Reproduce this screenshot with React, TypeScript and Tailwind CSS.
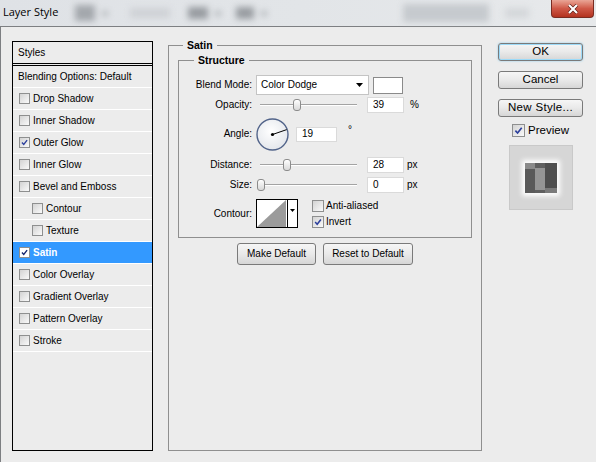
import type { ReactNode } from "react";

type Effect = { label: string; checked?: boolean; sub?: boolean; active?: boolean };

const effects: Effect[] = [
  { label: "Drop Shadow" },
  { label: "Inner Shadow" },
  { label: "Outer Glow", checked: true },
  { label: "Inner Glow" },
  { label: "Bevel and Emboss" },
  { label: "Contour", sub: true },
  { label: "Texture", sub: true },
  { label: "Satin", checked: true, active: true },
  { label: "Color Overlay" },
  { label: "Gradient Overlay" },
  { label: "Pattern Overlay" },
  { label: "Stroke" },
];

function Tick({ className = "" }: { className?: string }) {
  return (
    <svg viewBox="0 0 12 12" className={className}>
      <path d="M2.6 6.1 L5 8.7 L9.5 2.9" fill="none" stroke="currentColor" strokeWidth="1.8" />
    </svg>
  );
}

function CheckBox({ checked, light, className = "" }: { checked?: boolean; light?: boolean; className?: string }) {
  const face = light
    ? "bg-white text-[#14246e]"
    : "bg-linear-to-br from-[#d3d3d3] to-[#fafafa] text-[#2c3f9c]";
  return (
    <span className={`flex shrink-0 items-center justify-center border border-[#8e8f8f] ${face} ${className}`}>
      {checked && <Tick className="h-full w-full" />}
    </span>
  );
}

function Button({ children, className = "" }: { children: ReactNode; className?: string }) {
  return (
    <button
      type="button"
      className={`flex items-center justify-center rounded-[3px] border border-[#7a7a7a] bg-linear-to-b from-[#f6f6f6] via-[#e9e9e9] to-[#d6d6d6] leading-none text-black ${className}`}
    >
      {children}
    </button>
  );
}

function TitleBar() {
  return (
    <div className="flex h-[26px] shrink-0 items-start bg-linear-to-r from-[#dfe2e6] via-[#e2e5e8] to-[#e7e9eb]">
      <span className="mt-[5px] ml-[3px] font-['Open_Sans','Liberation_Sans',sans-serif] text-[11px] leading-[14px] text-black">
        Layer Style
      </span>
      {/* blurred toolbar showing through the glass frame */}
      <div className="mt-[4px] flex items-center blur-[3px]">
        <span className="ml-[17px] h-[16px] w-[20px] bg-[#a4a8ad]" />
        <span className="ml-[7px] h-[5px] w-[6px] bg-[#b3b7bb]" />
        <span className="ml-[22px] h-[10px] w-[40px] bg-[#cfd2d6]" />
        <span className="ml-[18px] h-[12px] w-[20px] bg-[#989ca1]" />
        <span className="ml-[7px] h-[5px] w-[6px] bg-[#b1b5b9]" />
        <span className="ml-[15px] h-[12px] w-[18px] bg-[#999da2]" />
        <span className="ml-[7px] h-[5px] w-[6px] bg-[#b1b5b9]" />
        <span className="ml-[136px] h-[18px] w-[86px] bg-[#c6cace]" />
        <span className="ml-[16px] h-[10px] w-[24px] bg-[#d4d7da]" />
      </div>
      <div className="ml-auto mr-[2px] flex h-[18px] w-[43px] items-center justify-center rounded-b-[4px] border border-t-0 border-[#7a2c22] bg-linear-to-b from-[#e9a596] via-[#cf5847] to-[#b3321f]">
        <svg viewBox="0 0 12 10" className="h-[10px] w-[12px]">
          <path d="M2 1 L10 9 M10 1 L2 9" stroke="#5a1a12" strokeWidth="3.4" />
          <path d="M2 1 L10 9 M10 1 L2 9" stroke="#ffffff" strokeWidth="2.2" />
        </svg>
      </div>
    </div>
  );
}

function StylesList() {
  return (
    <div className="mt-[14px] ml-[11px] h-[410px] w-[141px] shrink-0 border border-black text-[10px] leading-none text-black">
      <div className="flex h-[24px] items-center border-b-[3px] border-double border-black pl-[5px]">Styles</div>
      <div className="flex h-[22px] items-center border-b border-white pl-[5px]">Blending Options: Default</div>
      {effects.map((e) => (
        <div
          key={e.label}
          className={`flex h-[22px] items-center gap-[3px] border-b border-white ${e.sub ? "pl-[19px]" : "pl-[6px]"} ${
            e.active ? "bg-[#3399ff] font-bold text-white" : ""
          }`}
        >
          <CheckBox checked={e.checked} light={e.active} className="h-[11px] w-[11px]" />
          <span>{e.label}</span>
        </div>
      ))}
    </div>
  );
}

function Label({ children }: { children: ReactNode }) {
  return <span className="w-[73px] shrink-0 text-right">{children}</span>;
}

function Slider({ thumb }: { thumb: string }) {
  return (
    <div className="relative ml-[4px] h-[16px] w-[101px] shrink-0">
      <div className="absolute top-[7px] right-0 left-[4px] h-[2px] border-t border-[#a3a3a3] bg-white" />
      <div
        className={`absolute top-[2px] h-[12px] w-[8px] rounded-[3px] border border-[#8c8c8c] bg-linear-to-b from-white to-[#d8d8d8] ${thumb}`}
      />
    </div>
  );
}

function NumberBox({ value, className = "" }: { value: string; className?: string }) {
  return (
    <div className={`flex shrink-0 items-center border border-[#dadada] bg-white pl-[5px] ${className}`}>
      {value}
    </div>
  );
}

function AngleDial() {
  const r = 15;
  const a = (19 * Math.PI) / 180;
  const x = 16.5 + r * Math.cos(a);
  const y = 16.5 - r * Math.sin(a);
  return (
    <svg viewBox="0 0 33 33" className="ml-[4px] h-[33px] w-[33px] shrink-0">
      <defs>
        <radialGradient id="dialFace" cx="0.45" cy="0.4" r="0.6">
          <stop offset="0" stopColor="#ffffff" />
          <stop offset="1" stopColor="#e4e7ec" />
        </radialGradient>
      </defs>
      <circle cx="16.5" cy="16.5" r="15.5" fill="url(#dialFace)" stroke="#52648a" strokeWidth="1.4" />
      <line x1="16.5" y1="16.5" x2={x} y2={y} stroke="#000" strokeWidth="1" />
      <circle cx="16.5" cy="16.5" r="1.6" fill="#000" />
    </svg>
  );
}

function ContourPicker() {
  return (
    <div className="ml-[4px] flex h-[29px] w-[42px] shrink-0 border border-black bg-white">
      <svg viewBox="0 0 30 27" className="h-full w-[30px]" preserveAspectRatio="none">
        <polygon points="0,27 29,0 29,27" fill="#9b9b9b" />
      </svg>
      <div className="flex flex-1 justify-center border-l border-black pt-[9px]">
        <svg viewBox="0 0 5 3" className="h-[3px] w-[5px]">
          <polygon points="0,0 5,0 2.5,3" fill="#000" />
        </svg>
      </div>
    </div>
  );
}

function SatinPanel() {
  return (
    <fieldset className="mt-[12px] ml-[15px] h-[412px] w-[314px] shrink-0 border border-[#8f8f8f] px-[9px] text-[10px] leading-none text-black">
      <legend className="ml-[5px] px-[4px] text-[10.5px] leading-[12px] font-bold">Satin</legend>
      <fieldset className="mt-[3px] border border-[#8f8f8f] pb-[9px]">
        <legend className="ml-[15px] px-[4px] text-[10.5px] leading-[12px] font-bold">Structure</legend>

        <div className="mt-[9px] flex h-[20px] items-center">
          <Label>Blend Mode:</Label>
          <div className="ml-[4px] flex h-[20px] w-[113px] items-center justify-between border border-[#c4c4c4] bg-white pr-[5px] pl-[4px]">
            <span>Color Dodge</span>
            <svg viewBox="0 0 7 4" className="h-[4px] w-[7px]">
              <polygon points="0,0 7,0 3.5,4" fill="#000" />
            </svg>
          </div>
          <div className="ml-[4px] h-[17px] w-[30px] border border-[#8a8a8a] bg-white" />
        </div>

        <div className="mt-[2px] flex h-[16px] items-center">
          <Label>Opacity:</Label>
          <Slider thumb="left-[37px]" />
          <NumberBox value="39" className="ml-[10px] h-[16px] w-[37px]" />
          <span className="ml-[6px]">%</span>
        </div>

        <div className="mt-[4px] flex h-[34px] items-center">
          <Label>Angle:</Label>
          <AngleDial />
          <NumberBox value="19" className="ml-[7px] h-[15px] w-[41px]" />
          <span className="mb-[8px] ml-[11px]">°</span>
        </div>

        <div className="mt-[6px] flex h-[16px] items-center">
          <Label>Distance:</Label>
          <Slider thumb="left-[27px]" />
          <NumberBox value="28" className="ml-[10px] h-[16px] w-[37px]" />
          <span className="ml-[3px]">px</span>
        </div>

        <div className="mt-[4px] flex h-[16px] items-center">
          <Label>Size:</Label>
          <Slider thumb="left-[1px]" />
          <NumberBox value="0" className="ml-[10px] h-[16px] w-[37px]" />
          <span className="ml-[3px]">px</span>
        </div>

        <div className="mt-[6px] flex h-[29px] items-center">
          <Label>Contour:</Label>
          <ContourPicker />
          <div className="ml-[14px] flex flex-col gap-[4px]">
            <div className="flex items-center gap-[2px]">
              <CheckBox className="h-[12px] w-[12px]" />
              <span>Anti-aliased</span>
            </div>
            <div className="flex items-center gap-[2px]">
              <CheckBox checked className="h-[12px] w-[12px]" />
              <span>Invert</span>
            </div>
          </div>
        </div>
      </fieldset>

      <div className="mt-[5px] flex justify-center gap-[7px] text-[10px]">
        <Button className="h-[22px] w-[79px]">Make Default</Button>
        <Button className="h-[22px] w-[90px]">Reset to Default</Button>
      </div>
    </fieldset>
  );
}

function PreviewThumb() {
  return (
    <div className="mt-[8px] flex h-[65px] w-[64px] items-center justify-center border border-[#c9c9c9] bg-[#d6d6d6]">
      <div className="flex h-[30px] w-[32px] shadow-[0_0_5px_3px_#ffffff]">
        <div className="flex w-[10px] flex-col bg-[#5a5a5a]">
          <div className="h-[6px] bg-[#8a8a8a]" />
        </div>
        <div className="flex w-[10px] flex-col bg-[#5f5f5f]">
          <div className="mt-[5px] h-[22px] bg-[#959595]" />
        </div>
        <div className="flex w-[12px] flex-col justify-end bg-[#4e4e4e]">
          <div className="h-[5px] bg-[#7a7a7a]" />
        </div>
      </div>
    </div>
  );
}

function ActionColumn() {
  return (
    <div className="mt-[16px] ml-[16px] flex w-[85px] shrink-0 flex-col items-center text-[11.5px] text-black">
      <Button className="h-[18px] w-full border-[#3a8dc5] shadow-[inset_0_0_0_1px_#9cdaf8,0_0_2px_#7fc8ee]">OK</Button>
      <Button className="mt-[10px] h-[18px] w-full">Cancel</Button>
      <Button className="mt-[10px] h-[18px] w-full tracking-[0.3px]">New Style...</Button>
      <div className="mt-[7px] flex h-[13px] items-center gap-[3px] leading-none">
        <CheckBox checked className="h-[13px] w-[13px]" />
        <span>Preview</span>
      </div>
      <PreviewThumb />
    </div>
  );
}

export default function App() {
  return (
    <div className="flex h-[462px] w-[596px] flex-col overflow-hidden bg-[#ececec] font-['Liberation_Sans',Arial,sans-serif]">
      <TitleBar />
      <div className="flex flex-1 items-start border-t border-l border-[#7d7f82]">
        <StylesList />
        <SatinPanel />
        <ActionColumn />
      </div>
    </div>
  );
}
